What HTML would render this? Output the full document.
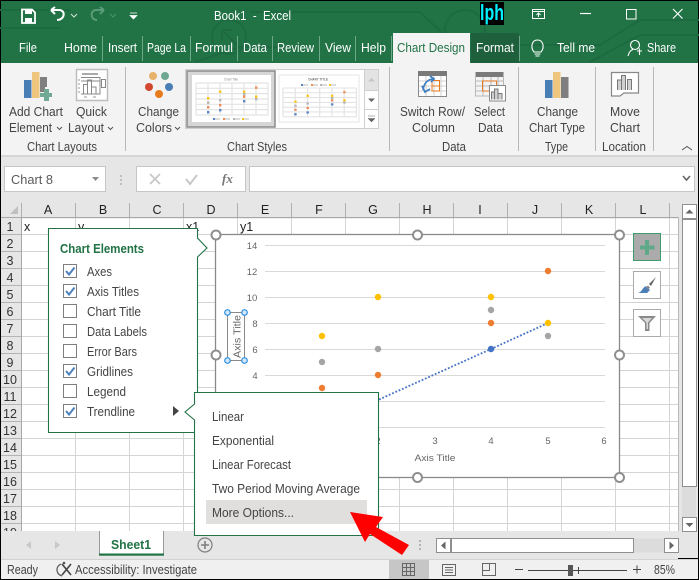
<!DOCTYPE html>
<html><head><meta charset="utf-8"><style>
html,body{margin:0;padding:0;width:699px;height:580px;overflow:hidden;background:#000}
svg{display:block}
text{font-family:"Liberation Sans",sans-serif;font-size:12.5px;fill:#444}
.w{fill:#fff}.h{fill:#222;text-anchor:middle}.r{fill:#333;text-anchor:middle}.m{fill:#444}
.a{fill:#666;font-size:9.5px;text-anchor:middle}
</style></head><body>
<svg width="699" height="580" viewBox="0 0 699 580" xmlns="http://www.w3.org/2000/svg">
<defs>
<g id="mini">
<g stroke="#e4e4e4" stroke-width="1.2"><path d="M0 0H72M0 5.3H72M0 10.6H72M0 16H72M0 21.3H72M0 26.6H72M0 32H72M0 0V32M12 0V32M24 0V32M36 0V32M48 0V32M60 0V32M72 0V32"/></g>
<g fill="#5b85c4"><rect x="11" y="28" width="2.4" height="2.4"/><rect x="23" y="26" width="2.4" height="2.4"/><rect x="47" y="17" width="2.4" height="2.4"/></g>
<g fill="#ee8f58"><rect x="11" y="23" width="2.4" height="2.4"/><rect x="23" y="21" width="2.4" height="2.4"/><rect x="47" y="12.5" width="2.4" height="2.4"/><rect x="59" y="3.5" width="2.4" height="2.4"/></g>
<g fill="#b5b5b5"><rect x="11" y="18.5" width="2.4" height="2.4"/><rect x="23" y="16" width="2.4" height="2.4"/><rect x="47" y="10" width="2.4" height="2.4"/><rect x="59" y="15" width="2.4" height="2.4"/></g>
<g fill="#fcc419"><rect x="11" y="14" width="2.4" height="2.4"/><rect x="23" y="7.5" width="2.4" height="2.4"/><rect x="47" y="7.5" width="2.4" height="2.4"/><rect x="59" y="12.5" width="2.4" height="2.4"/></g>
</g>
</defs>

<rect width="699" height="580" fill="#000"/>
<!-- title bar -->
<rect x="1" y="1" width="697" height="62" fill="#217346"/>
<g fill="none" stroke="#1d6a40" stroke-width="2">
<circle cx="229" cy="37" r="17"/><path d="M0 10H70M195 62L240 47H300M250 12H420L460 50M500 45H600L640 20H699M590 62L640 35H699M0 28H60"/><circle cx="465" cy="30" r="20"/><path d="M222 30L237 45M222 30H232M222 30V40"/>
</g>
<!-- QAT -->
<g fill="none" stroke="#fff" stroke-width="1.8"><path d="M22 9.5H32L35 12.5V23H22Z"/></g>
<rect x="25" y="10" width="7" height="4" fill="#fff"/><rect x="25" y="18" width="7" height="5" fill="#fff"/>
<path d="M51 10L55 7M51 10L55 14M51 10H59C66 10 65 20 57 20" fill="none" stroke="#fff" stroke-width="2"/>
<path d="M71 14L74 17L77 14" fill="none" stroke="#d4e4da" stroke-width="1"/>
<path d="M104 10L100 7M104 10L100 14M104 10H96C90 10 90 20 97 20" fill="none" stroke="#5a9b78" stroke-width="2"/>
<path d="M110 14L113 17L116 14" fill="none" stroke="#4f9370" stroke-width="1"/>
<path d="M130 13H137M130 15.5H137L133.5 19Z" fill="#fff" stroke="#fff" stroke-width=".7"/>
<text x="214" y="20" class="w" textLength="77" lengthAdjust="spacingAndGlyphs" xml:space="preserve">Book1  -  Excel</text>
<!-- logo -->
<rect x="480" y="2" width="24" height="23" fill="#000"/>
<text x="480" y="20" style="font-size:22px;font-weight:bold;fill:#00f0ff" textLength="24" lengthAdjust="spacingAndGlyphs">lph</text>
<!-- window controls -->
<g fill="none" stroke="#fff" stroke-width="1">
<rect x="532.5" y="9.5" width="12" height="9"/><path d="M532.5 11.5H544.5M538.5 17V13M536.5 15L538.5 13L540.5 15"/>
<path d="M580 13.5H591" stroke-width="1.2"/>
<rect x="626.5" y="9.5" width="9.5" height="9.5"/>
<path d="M673 9L682.5 18.5M682.5 9L673 18.5" stroke-width="1.1"/>
</g>
<!-- tabs -->
<rect x="471" y="33" width="48" height="30" fill="#1e5f3c"/>
<rect x="393" y="33" width="77" height="31" fill="#f3f3f3"/>
<path d="M102.5 36V61M142.5 36V61M190.5 36V61M237.5 36V61M272.5 36V61M319.5 36V61M355.5 36V61M391.5 36V61M519.5 36V61" stroke="#6ea88a" stroke-width="1"/>
<g class="w">
<text class="w" x="19" y="52" textLength="18" lengthAdjust="spacingAndGlyphs">File</text>
<text class="w" x="64" y="52" textLength="33" lengthAdjust="spacingAndGlyphs">Home</text>
<text class="w" x="108" y="52" textLength="29" lengthAdjust="spacingAndGlyphs">Insert</text>
<text class="w" x="147" y="52" textLength="39" lengthAdjust="spacingAndGlyphs">Page La</text>
<text class="w" x="195" y="52" textLength="38" lengthAdjust="spacingAndGlyphs">Formul</text>
<text class="w" x="243" y="52" textLength="24" lengthAdjust="spacingAndGlyphs">Data</text>
<text class="w" x="277" y="52" textLength="37" lengthAdjust="spacingAndGlyphs">Review</text>
<text class="w" x="325" y="52" textLength="26" lengthAdjust="spacingAndGlyphs">View</text>
<text class="w" x="361" y="52" textLength="25" lengthAdjust="spacingAndGlyphs">Help</text>
<text x="397" y="52" style="fill:#217346" textLength="68" lengthAdjust="spacingAndGlyphs">Chart Design</text>
<text class="w" x="476" y="52" textLength="38" lengthAdjust="spacingAndGlyphs">Format</text>
<text class="w" x="557" y="52" textLength="38" lengthAdjust="spacingAndGlyphs">Tell me</text>
<text class="w" x="647" y="52" textLength="29" lengthAdjust="spacingAndGlyphs">Share</text>
</g>
<!-- lightbulb -->
<path d="M534 52C530 47 532 40 537.500 40C543 40 545 47 541 52ZM534.500 54H540.500M535.500 56H539.500" fill="none" stroke="#fff" stroke-width="1.1"/>
<!-- share -->
<g fill="none" stroke="#fff" stroke-width="1.1"><circle cx="635" cy="45" r="4.500"/><path d="M628 56C629 52 631 50 633 49.500M637 51H642M639.500 48.500V55"/></g>

<!-- ribbon -->
<rect x="1" y="63" width="697" height="92" fill="#f3f3f3"/>
<rect x="393" y="63" width="77" height="1" fill="#f3f3f3"/>
<rect x="1" y="155" width="697" height="2" fill="#d6d6d6"/>
<rect x="1" y="157" width="697" height="45" fill="#e6e6e6"/>
<path d="M125.500 67V151M389.500 67V151M518.500 67V151M595.500 67V151M653.500 67V151" stroke="#b8b8b8" stroke-width="1"/>
<path d="M682 150L687 146.500L692 150" fill="none" stroke="#555" stroke-width="1"/>

<!-- Add chart icon -->
<rect x="24" y="80" width="7.500" height="18" fill="#4a7fb5"/><rect x="32" y="72" width="7.500" height="26" fill="#eec67e"/><path d="M40 77H47V87H45V92H40Z" fill="#7f7f7f"/>
<path d="M40 93H44V89H49V93H52V97H49V101H44V97H40Z" fill="#72a994"/>
<!-- Quick layout icon -->
<rect x="76.500" y="69.500" width="31" height="31" fill="#fff" stroke="#bdbdbd" stroke-width="1.500"/>
<path d="M82 74H98" stroke="#aaa" stroke-width="2"/>
<g fill="none" stroke="#888" stroke-width="1"><path d="M81 77.500H100V94H81M81 81H100M83.500 94V84.500H87.500V94M87.500 94V80H91.500V94M91.500 94V87H96V94"/><rect x="101.500" y="79.500" width="4" height="8"/></g>
<path d="M78 80H80M78 84H80M78 88H80M78 92H80M84 97H87M93 97H96" stroke="#999" stroke-width="1"/>
<!-- Change colors -->
<circle cx="153" cy="76" r="4" fill="#e8b26a"/><circle cx="165" cy="76" r="4" fill="#6fa892"/><circle cx="149" cy="87" r="4" fill="#d2492f"/><circle cx="169" cy="87" r="4" fill="#4a7fb5"/><circle cx="159" cy="94" r="4" fill="#e87a1e"/>

<!-- gallery -->
<rect x="185.500" y="69.500" width="193" height="59" fill="#fff" stroke="#cfcfcf"/>
<rect x="187" y="71" width="88" height="56" fill="#d6d6d6" stroke="#8a8a8a" stroke-width="1.500"/>
<rect x="192" y="75" width="79" height="47" fill="#fff"/>
<use href="#mini" transform="translate(196,83)"/>
<text x="224" y="80.500" style="font-size:3.500px;fill:#888" textLength="14" lengthAdjust="spacingAndGlyphs">Chart Title</text>
<g><rect x="213" y="118" width="2" height="2" fill="#5b85c4"/><rect x="223" y="118" width="2" height="2" fill="#ee8f58"/><rect x="233" y="118" width="2" height="2" fill="#b5b5b5"/><rect x="242" y="118" width="2" height="2" fill="#fcc419"/><path d="M215 119H220M225 119H230M235 119H240M244 119H249" stroke="#bbb"/></g>
<rect x="279" y="75" width="80" height="47" fill="#fff" stroke="#e6e6e6"/>
<use href="#mini" transform="translate(283,88) scale(1.020,.9)"/>
<text x="308" y="80.500" style="font-size:3.800px;font-weight:bold;fill:#777" textLength="20" lengthAdjust="spacingAndGlyphs">CHART TITLE</text>
<g><rect x="301" y="84" width="2" height="2" fill="#5b85c4"/><rect x="311" y="84" width="2" height="2" fill="#ee8f58"/><rect x="320" y="84" width="2" height="2" fill="#b5b5b5"/><rect x="329" y="84" width="2" height="2" fill="#fcc419"/><path d="M303 85H308M313 85H318M322 85H327M331 85H336" stroke="#bbb"/></g>
<rect x="364.500" y="69.500" width="14" height="21" fill="#e3e3e3" stroke="#cfcfcf"/>
<rect x="364.500" y="90.500" width="14" height="19" fill="#fff" stroke="#cfcfcf"/>
<rect x="364.500" y="109.500" width="14" height="19" fill="#fff" stroke="#cfcfcf"/>
<path d="M368 81.500L371.500 78L375 81.500Z" fill="#c4c4c4"/>
<path d="M368 98.500H375L371.500 102Z" fill="#666"/>
<path d="M368 116H375M368 118.500H375L371.500 122Z" fill="#666" stroke="#666" stroke-width=".5"/>

<!-- Switch row icon -->
<rect x="418" y="71" width="29" height="5" fill="#7a7a7a"/>
<rect x="418.500" y="71.500" width="28" height="25" fill="#fff" stroke="#8a8a8a"/>
<rect x="418" y="71" width="29" height="5" fill="#7a7a7a"/>
<path d="M419 81H446M419 86H446M419 91H446M426 76V96M434 76V96M441 76V96" stroke="#d0d0d0"/>
<path d="M432 80.500H439.500V91H432ZM432 86H439.500" fill="none" stroke="#e87a1e"/>
<path d="M423 90C424 83 428 79 434 79M430 76L434 79L431 82M422 86L425 92L430 89" fill="none" stroke="#3f7fc1" stroke-width="1.800"/>
<!-- Select data icon -->
<rect x="475" y="72" width="29" height="5" fill="#7a7a7a"/>
<path d="M475.500 72V96H503.500V72M475 81H504M475 86H504M475 91H504M483 77V96M491 77V96M498 77V96" fill="none" stroke="#b8b8b8"/>
<path d="M482.500 81H496.500V91H482.500Z" fill="none" stroke="#e87a1e"/>
<rect x="489.500" y="85.500" width="16" height="15.500" fill="#fff" stroke="#888"/>
<path d="M491.500 99.500V92H494.500V99.500M494.500 99.500V89H498V99.500M498 99.500V93.500H502V99.500" fill="#d0d0d0" stroke="#777"/>
<!-- Change chart type -->
<rect x="545" y="80" width="7.500" height="18" fill="#4a7fb5"/><rect x="553" y="72" width="7.500" height="26" fill="#eec67e"/><rect x="561" y="77" width="7.500" height="21" fill="#7f7f7f"/>
<!-- Move chart -->
<path d="M611.500 72.500H638.500V93H624L620 96H611.500Z" fill="#fff" stroke="#888" stroke-width="1.200"/>
<path d="M617.500 90V80H621.500V90M621.500 90V75.500H625.500V90M627.500 90V79.500H631.500V90" fill="#d0d0d0" stroke="#777"/>

<!-- ribbon labels -->
<text x="9" y="116" textLength="54" lengthAdjust="spacingAndGlyphs">Add Chart</text>
<text x="9" y="132" textLength="43" lengthAdjust="spacingAndGlyphs">Element</text>
<text x="76" y="116" textLength="31" lengthAdjust="spacingAndGlyphs">Quick</text>
<text x="68" y="132" textLength="36" lengthAdjust="spacingAndGlyphs">Layout</text>
<text x="27" y="151" textLength="70" lengthAdjust="spacingAndGlyphs">Chart Layouts</text>
<text x="138" y="116" textLength="41" lengthAdjust="spacingAndGlyphs">Change</text>
<text x="136" y="132" textLength="36" lengthAdjust="spacingAndGlyphs">Colors</text>
<text x="227" y="151" textLength="60" lengthAdjust="spacingAndGlyphs">Chart Styles</text>
<text x="400" y="116" textLength="65" lengthAdjust="spacingAndGlyphs">Switch Row/</text>
<text x="412" y="132" textLength="43" lengthAdjust="spacingAndGlyphs">Column</text>
<text x="474" y="116" textLength="31" lengthAdjust="spacingAndGlyphs">Select</text>
<text x="478" y="132" textLength="25" lengthAdjust="spacingAndGlyphs">Data</text>
<text x="442" y="151" textLength="24" lengthAdjust="spacingAndGlyphs">Data</text>
<text x="537" y="116" textLength="41" lengthAdjust="spacingAndGlyphs">Change</text>
<text x="529" y="132" textLength="56" lengthAdjust="spacingAndGlyphs">Chart Type</text>
<text x="545" y="151" textLength="23" lengthAdjust="spacingAndGlyphs">Type</text>
<text x="610" y="116" textLength="30" lengthAdjust="spacingAndGlyphs">Move</text>
<text x="610" y="132" textLength="30" lengthAdjust="spacingAndGlyphs">Chart</text>
<text x="602" y="151" textLength="44" lengthAdjust="spacingAndGlyphs">Location</text>
<path d="M57 127L59.500 129.500L62 127M108 127L110.500 129.500L113 127M175 127L177.500 129.500L180 127" fill="none" stroke="#555"/>

<!-- formula bar -->
<rect x="4.500" y="166.500" width="101" height="25" fill="#fff" stroke="#c6c6c6"/>
<text x="11" y="184" style="font-size:13px;fill:#5a5a5a" textLength="42" lengthAdjust="spacingAndGlyphs">Chart 8</text>
<path d="M92 177H99L95.500 181Z" fill="#8a8a8a"/>
<path d="M121 175V177M121 179V181M121 183V185" stroke="#b4b4b4" stroke-width="1.500"/>
<rect x="136.500" y="166.500" width="109" height="25" fill="#fff" stroke="#c6c6c6"/>
<path d="M150 174L160 184M160 174L150 184" stroke="#c8c8c8" stroke-width="1.800"/>
<path d="M186 179L190 184L197 175" fill="none" stroke="#c8c8c8" stroke-width="2"/>
<text x="222" y="183" style="font-family:'Liberation Serif',serif;font-style:italic;font-weight:bold;font-size:13px;fill:#777">fx</text>
<rect x="249.500" y="166.500" width="445" height="25" fill="#fff" stroke="#c6c6c6"/>
<path d="M683 176L686.500 180L690 176" fill="none" stroke="#666" stroke-width="1.600"/>

<!-- sheet -->
<rect x="22" y="218" width="656" height="313" fill="#fff"/>
<path d="M75.500 218V531M129.500 218V531M183.500 218V531M237.500 218V531M291.500 218V531M345.500 218V531M399.500 218V531M453.500 218V531M507.500 218V531M561.500 218V531M615.500 218V531M669.500 218V531
M22 234.500H678M22 251.500H678M22 268.500H678M22 285.500H678M22 302.500H678M22 319.500H678M22 336.500H678M22 353.500H678M22 370.500H678M22 387.500H678M22 404.500H678M22 421.500H678M22 438.500H678M22 455.500H678M22 472.500H678M22 489.500H678M22 506.500H678M22 523.500H678" stroke="#d4d4d4"/>
<rect x="678" y="202" width="20" height="356" fill="#e6e6e6"/>
<path d="M678.500 217V531" stroke="#b8b8b8"/>
<!-- column headers -->
<rect x="1" y="202" width="677" height="15" fill="#e6e6e6"/>
<rect x="1" y="217" width="677" height="1.200" fill="#a8a8a8"/>
<path d="M21.500 203V217M75.500 203V217M129.500 203V217M183.500 203V217M237.500 203V217M291.500 203V217M345.500 203V217M399.500 203V217M453.500 203V217M507.500 203V217M561.500 203V217M615.500 203V217M669.500 203V217" stroke="#b0b0b0"/>
<path d="M10 214L18 206V214Z" fill="#c0c0c0"/>
<text class="h" x="48" y="214">A</text><text class="h" x="103" y="214">B</text><text class="h" x="157" y="214">C</text><text class="h" x="211" y="214">D</text><text class="h" x="265" y="214">E</text><text class="h" x="319" y="214">F</text><text class="h" x="373" y="214">G</text><text class="h" x="427" y="214">H</text><text class="h" x="480" y="214">I</text><text class="h" x="535" y="214">J</text><text class="h" x="589" y="214">K</text><text class="h" x="643" y="214">L</text>
<!-- row headers -->
<rect x="1" y="218" width="20.500" height="313" fill="#e6e6e6"/>
<path d="M21.500 218V531" stroke="#a8a8a8"/>
<path d="M1 234.500H21M1 251.500H21M1 268.500H21M1 285.500H21M1 302.500H21M1 319.500H21M1 336.500H21M1 353.500H21M1 370.500H21M1 387.500H21M1 404.500H21M1 421.500H21M1 438.500H21M1 455.500H21M1 472.500H21M1 489.500H21M1 506.500H21M1 523.500H21" stroke="#b4b4b4"/>
<text class="r" x="10" y="231">1</text><text class="r" x="10" y="248">2</text><text class="r" x="10" y="265">3</text><text class="r" x="10" y="282">4</text><text class="r" x="10" y="299">5</text><text class="r" x="10" y="316">6</text><text class="r" x="10" y="333">7</text><text class="r" x="10" y="350">8</text><text class="r" x="10" y="367">9</text><text class="r" x="10" y="384">10</text><text class="r" x="10" y="401">11</text><text class="r" x="10" y="418">12</text><text class="r" x="10" y="435">13</text><text class="r" x="10" y="452">14</text><text class="r" x="10" y="469">15</text><text class="r" x="10" y="486">16</text><text class="r" x="10" y="503">17</text><text class="r" x="10" y="520">18</text><text class="r" x="10" y="537">19</text>
<text x="24" y="231" style="fill:#222">x</text><text x="78" y="231" style="fill:#222">y</text><text x="186" y="231" style="fill:#222">x1</text><text x="240" y="231" style="fill:#222">y1</text>

<!-- chart -->
<rect x="215.500" y="234.500" width="404" height="243" fill="#fff" stroke="#8a8a8a" stroke-width="1.300"/>
<path d="M265 245.500H605M265 271.500H605M265 297.500H605M265 323.500H605M265 349.500H605M265 375.500H605M265 401.500H605M265 427.500H605" stroke="#d9d9d9"/>
<text class="a" x="252" y="249">14</text><text class="a" x="252" y="275">12</text><text class="a" x="252" y="301">10</text><text class="a" x="255" y="327">8</text><text class="a" x="255" y="353">6</text><text class="a" x="255" y="379">4</text>
<text class="a" x="378" y="444">2</text><text class="a" x="435" y="444">3</text><text class="a" x="491" y="444">4</text><text class="a" x="548" y="444">5</text><text class="a" x="604" y="444">6</text>
<text class="a" x="435" y="461" textLength="41" lengthAdjust="spacingAndGlyphs">Axis Title</text>
<path d="M379 399.500L491 349L548 323" stroke="#4472c4" stroke-width="1.800" stroke-dasharray="1.800 1.800" fill="none"/>
<g fill="#ffc000"><circle cx="322" cy="336" r="3.200"/><circle cx="378" cy="297" r="3.200"/><circle cx="491" cy="297" r="3.200"/><circle cx="548" cy="323" r="3.200"/></g>
<g fill="#a5a5a5"><circle cx="322" cy="362" r="3.200"/><circle cx="378" cy="349" r="3.200"/><circle cx="491" cy="310" r="3.200"/><circle cx="548" cy="336" r="3.200"/></g>
<g fill="#ed7d31"><circle cx="322" cy="388" r="3.200"/><circle cx="378" cy="375" r="3.200"/><circle cx="491" cy="323" r="3.200"/><circle cx="548" cy="271" r="3.200"/></g>
<circle cx="491" cy="349" r="3.200" fill="#4472c4"/>
<!-- axis title -->
<rect x="227.500" y="312.500" width="17" height="48" fill="#fff" stroke="#8a8a8a"/>
<text transform="translate(240.500,358) rotate(-90)" style="font-size:10.5px;fill:#666" textLength="43" lengthAdjust="spacingAndGlyphs">Axis Title</text>
<g fill="#d5e8fb" stroke="#2f8fe0" stroke-width="1.200"><circle cx="227.500" cy="312.500" r="2.800"/><circle cx="244.500" cy="312.500" r="2.800"/><circle cx="227.500" cy="360.500" r="2.800"/><circle cx="244.500" cy="360.500" r="2.800"/></g>
<!-- handles -->
<g fill="#fff" stroke="#8f8f8f" stroke-width="2"><circle cx="216" cy="235" r="4.500"/><circle cx="417.500" cy="235" r="4.500"/><circle cx="619.500" cy="235" r="4.500"/><circle cx="216" cy="355" r="4.500"/><circle cx="619.500" cy="355" r="4.500"/><circle cx="417.500" cy="477.500" r="4.500"/><circle cx="619.500" cy="477.500" r="4.500"/></g>

<!-- side buttons -->
<rect x="633.500" y="233.500" width="27" height="27" fill="#ababab" stroke="#3f9a6c"/>
<path d="M640 245.500H645V240H649V245.500H654.500V249.500H649V255H645V249.500H640Z" fill="#5fa88a"/>
<rect x="633.500" y="271.500" width="27" height="27" fill="#fff" stroke="#ababab"/>
<path d="M656 277L649 284L651 286Z" fill="#666"/><path d="M646 286L650 290L647 293H638C642 292 642 288 646 286Z" fill="#4a7fb5"/><path d="M646 287.500L648 285.500L650 287.500L648 289.500Z" fill="#888"/>
<rect x="633.500" y="309.500" width="27" height="27" fill="#fff" stroke="#ababab"/>
<path d="M638 316H656L649.500 323V331H645V323Z" fill="#8a8a8a"/><path d="M642 318H652L648 322.500V329H646.500V322.500Z" fill="#d8d8d8"/>

<!-- vertical scrollbar -->
<rect x="682" y="204" width="14" height="327" fill="#dcdcdc"/>
<rect x="682.500" y="204.500" width="14" height="14" fill="#fff" stroke="#8f8f8f"/>
<path d="M685.500 213.500L689.500 209.500L693.500 213.500Z" fill="#666"/>
<rect x="682.500" y="219.500" width="14" height="267" fill="#fff" stroke="#8f8f8f"/>
<rect x="682.500" y="517.500" width="14" height="14" fill="#fff" stroke="#8f8f8f"/>
<path d="M685.500 523L689.500 527L693.500 523Z" fill="#666"/>

<!-- tab bar -->
<rect x="1" y="531" width="677" height="28" fill="#e6e6e6"/>
<path d="M31 541V549L26 545ZM55 541V549L60 545Z" fill="#c8c8c8"/>
<path d="M99.500 531V555H163.500V531" fill="#fff" stroke="#9a9a9a"/>
<rect x="99" y="553.500" width="65" height="2.200" fill="#217346"/>
<text x="111" y="549" style="font-weight:bold;fill:#217346" textLength="40" lengthAdjust="spacingAndGlyphs">Sheet1</text>
<circle cx="205" cy="545" r="7" fill="none" stroke="#7f7f7f" stroke-width="1.200"/><path d="M201 545H209M205 541V549" stroke="#7f7f7f" stroke-width="1.600"/>
<path d="M420 540V542M420 544V546M420 548V550" stroke="#b4b4b4" stroke-width="2"/>
<rect x="436.500" y="538.500" width="242" height="14" fill="#dcdcdc" stroke="none"/>
<rect x="436.500" y="538.500" width="14" height="14" fill="#fff" stroke="#8f8f8f"/>
<path d="M445.500 541.500V549.500L441 545.500Z" fill="#666"/>
<rect x="451.500" y="538.500" width="182" height="14" fill="#fff" stroke="#8f8f8f"/>
<rect x="664.500" y="538.500" width="14" height="14" fill="#fff" stroke="#8f8f8f"/>
<path d="M669.500 541.500V549.500L674 545.500Z" fill="#666"/>

<!-- chart elements popup -->
<path d="M48.500 228.500H197.500V238L207 248L197.500 257V432.500H48.500Z" fill="#fff" stroke="#217346" stroke-width="1.100"/>
<text x="60" y="253" style="font-weight:bold;fill:#217346" textLength="84" lengthAdjust="spacingAndGlyphs">Chart Elements</text>
<g fill="#fff" stroke="#7f7f7f" stroke-width="1"><rect x="63.500" y="264.500" width="13" height="13"/><rect x="63.500" y="284.500" width="13" height="13"/><rect x="63.500" y="304.500" width="13" height="13"/><rect x="63.500" y="324.500" width="13" height="13"/><rect x="63.500" y="344.500" width="13" height="13"/><rect x="63.500" y="364.500" width="13" height="13"/><rect x="63.500" y="384.500" width="13" height="13"/><rect x="63.500" y="404.500" width="13" height="13"/></g>
<path d="M66 271L69 274.500L74.500 267.500M66 291L69 294.500L74.500 287.500M66 371L69 374.500L74.500 367.500M66 411L69 414.500L74.500 407.500" fill="none" stroke="#4f81bd" stroke-width="2"/>
<text class="m" x="87" y="276" textLength="25" lengthAdjust="spacingAndGlyphs">Axes</text>
<text class="m" x="87" y="296" textLength="52" lengthAdjust="spacingAndGlyphs">Axis Titles</text>
<text class="m" x="87" y="316" textLength="54" lengthAdjust="spacingAndGlyphs">Chart Title</text>
<text class="m" x="87" y="336" textLength="60" lengthAdjust="spacingAndGlyphs">Data Labels</text>
<text class="m" x="87" y="356" textLength="50" lengthAdjust="spacingAndGlyphs">Error Bars</text>
<text class="m" x="87" y="376" textLength="46" lengthAdjust="spacingAndGlyphs">Gridlines</text>
<text class="m" x="87" y="396" textLength="39" lengthAdjust="spacingAndGlyphs">Legend</text>
<text class="m" x="87" y="416" textLength="48" lengthAdjust="spacingAndGlyphs">Trendline</text>
<path d="M173 406L179 411L173 416Z" fill="#444"/>

<!-- submenu -->
<path d="M194.500 392.500H378.500V535.500H194.500V420L185 412L194.500 404Z" fill="#fff" stroke="#217346" stroke-width="1.100"/>
<rect x="206" y="500" width="161" height="24" fill="#e0dfde"/>
<text class="m" x="212" y="421" textLength="32" lengthAdjust="spacingAndGlyphs">Linear</text>
<text class="m" x="212" y="445" textLength="62" lengthAdjust="spacingAndGlyphs">Exponential</text>
<text class="m" x="212" y="469" textLength="79" lengthAdjust="spacingAndGlyphs">Linear Forecast</text>
<text class="m" x="212" y="493" textLength="148" lengthAdjust="spacingAndGlyphs">Two Period Moving Average</text>
<text class="m" x="212" y="517" textLength="82" lengthAdjust="spacingAndGlyphs">More Options...</text>

<!-- red arrow -->
<path d="M350 512L383 517L376 527L409 545L402 555L370 534L365 542Z" fill="#ff0000"/>

<!-- status bar -->
<rect x="1" y="559" width="697" height="20" fill="#f0f0f0"/>
<rect x="1" y="559" width="697" height="1" fill="#d2d2d2"/>
<text x="7" y="574" textLength="31" lengthAdjust="spacingAndGlyphs">Ready</text>
<path d="M61 564C55 567 56 574 62 576" fill="none" stroke="#555" stroke-width="1.200"/><path d="M62 564L71 575M71 564L62 575" stroke="#444" stroke-width="1.600"/><circle cx="64" cy="563" r="1.300" fill="#555"/>
<text x="75" y="574" textLength="122" lengthAdjust="spacingAndGlyphs">Accessibility: Investigate</text>
<rect x="389" y="560" width="40" height="19" fill="#c6c6c6"/>
<path d="M402.500 563.500H414.500V575.500H402.500ZM402.500 567.500H414.500M402.500 571.500H414.500M406.500 563.500V575.500M410.500 563.500V575.500" fill="none" stroke="#666"/>
<rect x="442.500" y="564.500" width="13" height="11" fill="none" stroke="#666"/><path d="M445 567.500H453M445 570H453M445 572.500H453" stroke="#666"/>
<path d="M482.500 563.500H495.500V575.500H482.500ZM482.500 570.500H489.500V563.500" fill="none" stroke="#666"/>
<path d="M515 569.500H523M528 570.500H627M633 569.500H641M637 565.500V573.500M578.500 567V574" stroke="#444" stroke-width="1"/>
<rect x="568" y="565" width="5" height="11" fill="#555"/>
<text x="654" y="574" textLength="21" lengthAdjust="spacingAndGlyphs">85%</text>
</svg>
</body></html>
